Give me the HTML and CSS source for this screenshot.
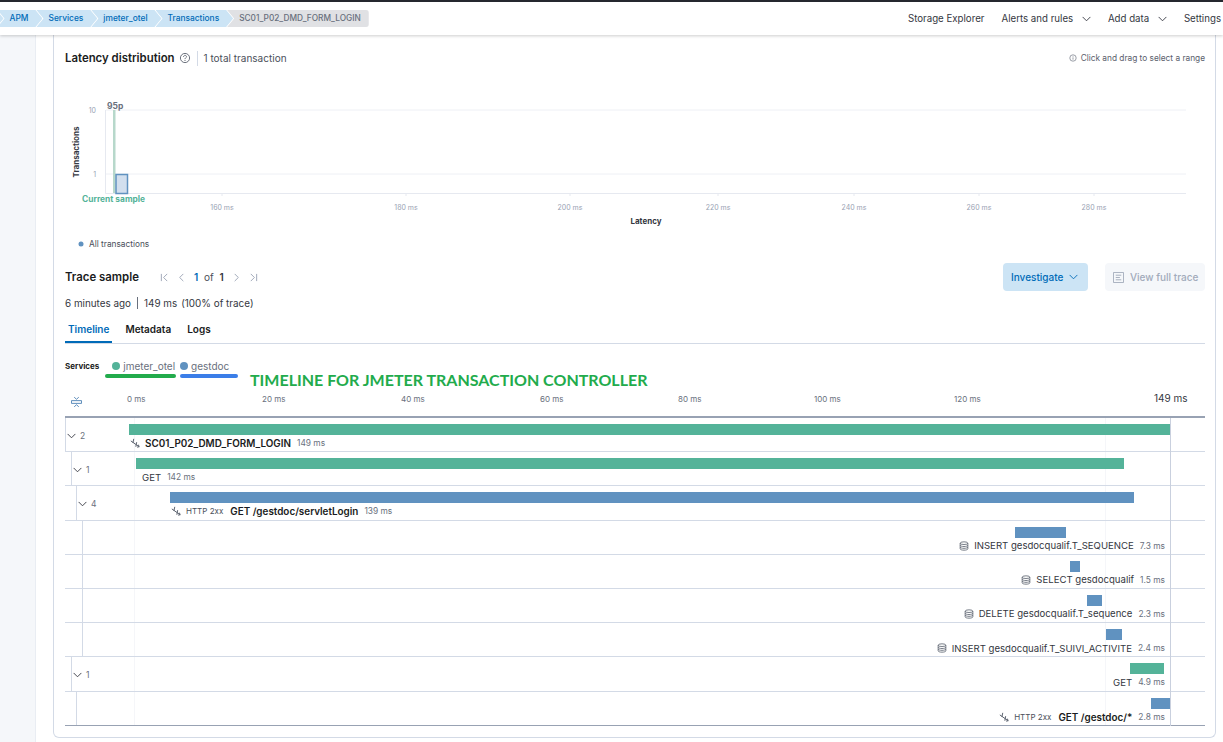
FILE: index.html
```html
<!DOCTYPE html>
<html lang="en">
<head>
    <meta charset="UTF-8">
    <title>SC01_P02_DMD_FORM_LOGIN - Transactions - APM</title>
    <link rel="stylesheet" href="styles.css">
</head>
<body>
    <svg class="sprites" width="0" height="0">
        <symbol id="i-merge" viewBox="0 0 12 12">
            <path d="M1 3.500 11 10.500M4.500 1 3.500 6M8 5 7 10.500M11 10.500 8.500 11M11 10.500 10 8" fill="none" stroke="currentColor" stroke-width="1.200"/>
        </symbol>
        <symbol id="i-db" viewBox="0 0 12 12">
            <ellipse cx="6" cy="2.6" rx="4.6" ry="1.6" fill="none" stroke="currentColor"/>
            <path d="M1.4 2.6v6.8c0 .9 2 1.6 4.6 1.6s4.6-.7 4.6-1.6V2.6M1.4 5c0 .9 2 1.6 4.6 1.6s4.6-.7 4.6-1.6M1.4 7.2c0 .9 2 1.6 4.6 1.6s4.6-.7 4.6-1.6" fill="none" stroke="currentColor"/>
        </symbol>
        <symbol id="i-down" viewBox="0 0 10 6">
            <path d="M.7.7 5 5 9.3.7" fill="none" stroke="currentColor" stroke-width="1"/>
        </symbol>
    </svg>

    <header class="topbar">
        <nav class="crumbs">
            <a class="crumb crumb-cut"></a>
            <a class="crumb">APM</a>
            <a class="crumb">Services</a>
            <a class="crumb">jmeter_otel</a>
            <a class="crumb">Transactions</a>
            <span class="crumb crumb-last">SC01_P02_DMD_FORM_LOGIN</span>
        </nav>
        <div class="topmenu">
            <a>Storage Explorer</a>
            <a>Alerts and rules <svg class="caret"><use href="#i-down"/></svg></a>
            <a>Add data <svg class="caret"><use href="#i-down"/></svg></a>
            <a>Settings</a>
        </div>
    </header>

    <div class="layout">
        <aside class="side"></aside>
        <main class="main">
            <section class="card">
                <div class="lat-head">
                    <h2 class="title">Latency distribution</h2>
                    <svg class="help" viewBox="0 0 12 12">
                        <circle cx="6" cy="6" r="4.6" fill="none" stroke="currentColor" stroke-width=".9"/>
                        <path d="M4.5 4.9c0-2 3-2 3-.2 0 1.100-1.500 1.100-1.500 2.400" fill="none" stroke="currentColor" stroke-width=".9"/>
                        <circle cx="6" cy="8.500" r=".6" fill="currentColor"/>
                    </svg>
                    <span class="lat-count">1 total transaction</span>
                    <span class="hint">
                        <svg class="hint-icon" viewBox="0 0 12 12">
                            <circle cx="6" cy="6" r="4.800" fill="none" stroke="currentColor"/>
                            <path d="M6 5v3.500M6 3v1" stroke="currentColor"/>
                        </svg>
                        Click and drag to select a range
                    </span>
                </div>

                <svg class="chart" viewBox="65 90 1140 165" width="1140" height="165">
                    <g stroke="#eef0f5">
                        <path d="M106 110H1186M106 174H1186"/>
                    </g>
                    <path d="M105.500 110V193.500H1186" fill="none" stroke="#e6e9f0"/>
                    <path d="M222 193v3M406 193v3M570 193v3M718 193v3M854 193v3M979 193v3M1094 193v3" stroke="#e6e9f0"/>
                    <rect x="113" y="110" width="2.500" height="83" fill="#b7d8cb"/>
                    <rect x="116" y="174.500" width="11.500" height="19" fill="#d2dfee" stroke="#6092c0" stroke-width="1.500"/>
                    <text class="c-tick" x="96" y="113" text-anchor="end">10</text>
                    <text class="c-tick" x="96" y="177" text-anchor="end">1</text>
                    <text class="c-95" x="107" y="108.500">95p</text>
                    <text class="c-axis" transform="translate(79 152) rotate(-90)" text-anchor="middle">Transactions</text>
                    <text class="c-sample" x="82" y="202">Current sample</text>
                    <g class="c-tick" text-anchor="middle">
                        <text x="222" y="210">160 ms</text>
                        <text x="406" y="210">180 ms</text>
                        <text x="570" y="210">200 ms</text>
                        <text x="718" y="210">220 ms</text>
                        <text x="854" y="210">240 ms</text>
                        <text x="979" y="210">260 ms</text>
                        <text x="1094" y="210">280 ms</text>
                    </g>
                    <text class="c-axis" x="646" y="224" text-anchor="middle">Latency</text>
                    <circle cx="81" cy="244" r="2.500" fill="#6092c0"/>
                    <text class="c-legend" x="89" y="246.800">All transactions</text>
                </svg>

                <div class="trace-head">
                    <h2 class="title">Trace sample</h2>
                    <div class="pager">
                        <svg class="pg" viewBox="0 0 10 10"><path d="M1.500 1v8M8 1 4 5l4 4" /></svg>
                        <svg class="pg" viewBox="0 0 10 10"><path d="M7 1 3 5l4 4"/></svg>
                        <span class="pg-text"><b>1</b> of <em>1</em></span>
                        <svg class="pg" viewBox="0 0 10 10"><path d="M3 1l4 4-4 4"/></svg>
                        <svg class="pg" viewBox="0 0 10 10"><path d="M8.500 1v8M2 1l4 4-4 4"/></svg>
                    </div>
                    <button class="btn btn-blue">Investigate <svg class="caret"><use href="#i-down"/></svg></button>
                    <button class="btn btn-off">
                        <svg class="doc" viewBox="0 0 12 12"><path d="M.5.5h11v11H.5zM3 3.500h6M3 6h4.500M3 8.500h6" fill="none" stroke="currentColor"/></svg>
                        View full trace
                    </button>
                </div>

                <div class="trace-meta">
                    <span>6 minutes ago</span><span class="sep"></span><span>149 ms</span><span class="pct">(100% of trace)</span>
                </div>

                <div class="tabs">
                    <a class="tab tab-on">Timeline</a>
                    <a class="tab">Metadata</a>
                    <a class="tab">Logs</a>
                </div>

                <div class="legend">
                    <span class="legend-title">Services</span>
                    <span class="svc svc-first"><i class="dot dot-green"></i>jmeter_otel</span>
                    <span class="svc"><i class="dot dot-blue"></i>gestdoc</span>
                    <i class="mark mark-green"></i>
                    <i class="mark mark-blue"></i>
                    <span class="note">TIMELINE FOR JMETER TRANSACTION CONTROLLER</span>
                </div>

                <div class="axis">
                    <svg class="collapse" viewBox="0 0 12 12">
                        <path d="M.5 4.500h11v3H.5zM3.500 .8 6 3 8.500 .8M3.500 11.200 6 9 8.500 11.200" fill="none" stroke="#4e82b5"/>
                    </svg>
                    <span class="tick" style="left:62px">0 ms</span>
                    <span class="tick" style="left:197px">20 ms</span>
                    <span class="tick" style="left:336px">40 ms</span>
                    <span class="tick" style="left:475px">60 ms</span>
                    <span class="tick" style="left:613px">80 ms</span>
                    <span class="tick" style="left:749px">100 ms</span>
                    <span class="tick" style="left:889px">120 ms</span>
                    <span class="tick-end">149 ms</span>
                </div>

                <div class="rows">
                    <i class="grid-line grid-a"></i>
                    <i class="grid-line grid-b"></i>
                    <div class="row">
                        <div class="branch lvl0"><svg class="caret"><use href="#i-down"/></svg><span class="count">2</span></div>
                        <div class="bar bar-green" style="margin-left:64px;width:1041px"></div>
                        <div class="label" style="margin-left:65px">
                            <svg class="ico"><use href="#i-merge"/></svg>
                            <b class="name">SC01_P02_DMD_FORM_LOGIN</b><span class="dur">149 ms</span>
                        </div>
                    </div>
                    <div class="row">
                        <div class="branch lvl1"><svg class="caret"><use href="#i-down"/></svg><span class="count">1</span></div>
                        <div class="bar bar-green" style="margin-left:71px;width:988px"></div>
                        <div class="label" style="margin-left:77px">
                            <span class="name">GET</span><span class="dur">142 ms</span>
                        </div>
                    </div>
                    <div class="row">
                        <div class="branch lvl2"><svg class="caret"><use href="#i-down"/></svg><span class="count">4</span></div>
                        <div class="bar bar-blue" style="margin-left:105px;width:964px"></div>
                        <div class="label" style="margin-left:106px">
                            <svg class="ico"><use href="#i-merge"/></svg>
                            <span class="status">HTTP 2xx</span><b class="name">GET /gestdoc/servletLogin</b><span class="dur">139 ms</span>
                        </div>
                    </div>
                    <div class="row">
                        <div class="branch lvl3"></div>
                        <div class="bar bar-blue" style="margin-left:950px;width:51px"></div>
                        <div class="label label-end">
                            <svg class="ico"><use href="#i-db"/></svg>
                            <span class="name">INSERT gesdocqualif.T_SEQUENCE</span><span class="dur">7.3 ms</span>
                        </div>
                    </div>
                    <div class="row">
                        <div class="branch lvl3"></div>
                        <div class="bar bar-blue" style="margin-left:1005px;width:10px"></div>
                        <div class="label label-end">
                            <svg class="ico"><use href="#i-db"/></svg>
                            <span class="name">SELECT gesdocqualif</span><span class="dur">1.5 ms</span>
                        </div>
                    </div>
                    <div class="row">
                        <div class="branch lvl3"></div>
                        <div class="bar bar-blue" style="margin-left:1022px;width:15px"></div>
                        <div class="label label-end">
                            <svg class="ico"><use href="#i-db"/></svg>
                            <span class="name">DELETE gesdocqualif.T_sequence</span><span class="dur">2.3 ms</span>
                        </div>
                    </div>
                    <div class="row">
                        <div class="branch lvl3"></div>
                        <div class="bar bar-blue" style="margin-left:1041px;width:16px"></div>
                        <div class="label label-end">
                            <svg class="ico"><use href="#i-db"/></svg>
                            <span class="name">INSERT gesdocqualif.T_SUIVI_ACTIVITE</span><span class="dur">2.4 ms</span>
                        </div>
                    </div>
                    <div class="row">
                        <div class="branch lvl1"><svg class="caret"><use href="#i-down"/></svg><span class="count">1</span></div>
                        <div class="bar bar-green" style="margin-left:1065px;width:34px"></div>
                        <div class="label label-end">
                            <span class="name">GET</span><span class="dur">4.9 ms</span>
                        </div>
                    </div>
                    <div class="row row-last">
                        <div class="branch lvl2"></div>
                        <div class="bar bar-blue" style="margin-left:1086px;width:19px"></div>
                        <div class="label label-end">
                            <svg class="ico"><use href="#i-merge"/></svg>
                            <span class="status">HTTP 2xx</span><b class="name">GET /gestdoc/*</b><span class="dur">2.8 ms</span>
                        </div>
                    </div>
                    <i class="end-line"></i>
                </div>
            </section>
        </main>
    </div>
</body>
</html>
```

FILE: styles.css
```css
html, body {
    height: 100%;
}
body {
    margin: 0;
    overflow: hidden;
    background-color: #ffffff;
    color: #343741;
    font-family: 'Inter', 'Liberation Sans', sans-serif;
    font-size: 10px;
}
a {
    color: inherit;
    text-decoration: none;
}
.sprites {
    position: absolute;
}
.caret {
    width: 9px;
    height: 6px;
    color: #343741;
}

/* top bar */
.topbar {
    position: relative;
    z-index: 2;
    display: flex;
    align-items: center;
    justify-content: space-between;
    box-sizing: border-box;
    height: 35px;
    border-top: 2px solid #25282f;
    background-color: #ffffff;
    box-shadow: 0 1px 3px rgba(0, 0, 0, 0.2);
}
.crumbs {
    display: flex;
    margin-left: -10.5px;
}
.crumb {
    display: block;
    height: 17px;
    margin-right: -6px;
    padding: 0 14px 0 12px;
    background-color: #cce4f5;
    color: #006bb8;
    font-size: 8.4px;
    font-weight: 500;
    line-height: 17px;
    clip-path: polygon(0 0, calc(100% - 7px) 0, 100% 50%, calc(100% - 7px) 100%, 0 100%, 7px 50%);
}
.crumb-cut {
    box-sizing: border-box;
    width: 14px;
    padding: 0;
}
.crumb-last {
    margin-right: 0;
    padding-right: 8px;
    background-color: #e0e1e4;
    color: #69707d;
    font-size: 8.3px;
    border-radius: 0 3px 3px 0;
    clip-path: polygon(0 0, 100% 0, 100% 100%, 0 100%, 7px 50%);
}
.topmenu {
    display: flex;
    gap: 17px;
    margin-right: 2px;
    white-space: nowrap;
    font-size: 9.7px;
}
.topmenu .caret {
    margin-left: 6px;
}

/* page */
.layout {
    display: flex;
    height: 707px;
}
.side {
    width: 36px;
    background-color: #f5f7fa;
    border-right: 1px solid #e9edf3;
    box-sizing: border-box;
}
.main {
    flex: 1;
    padding: 0 7px 4px 17px;
}
.card {
    box-sizing: border-box;
    height: 703px;
    padding: 0 10px 0 11px;
    border: 1px solid #d3dae6;
    border-top: 0;
    border-radius: 0 0 6px 6px;
}
.title {
    margin: 0;
    color: #1a1c21;
    font-size: 11.4px;
    font-weight: 600;
}

/* latency header */
.lat-head {
    display: flex;
    align-items: center;
    height: 16px;
    padding-top: 15px;
}
.help {
    width: 12px;
    height: 12px;
    margin-left: 4px;
    color: #5d6470;
}
.lat-count {
    margin-left: 6px;
    padding-left: 6px;
    border-left: 1px solid #d3dae6;
    font-size: 10px;
    line-height: 15px;
    color: #4b4f5a;
}
.hint {
    display: flex;
    align-items: center;
    margin-left: auto;
    color: #5a606c;
    font-size: 8.3px;
}
.hint-icon {
    width: 8px;
    height: 8px;
    margin-right: 4px;
    color: #69707d;
}

/* chart */
.chart {
    display: block;
    margin-top: 24px;
}
.chart text {
    font-family: 'Inter', 'Liberation Sans', sans-serif;
}
.c-tick {
    fill: #98a2b3;
    font-size: 7px;
}
.c-95 {
    fill: #69707d;
    font-size: 8.5px;
    font-weight: 700;
}
.c-axis {
    fill: #343741;
    font-size: 8px;
    font-weight: 700;
}
.c-sample {
    fill: #54b399;
    font-size: 8.4px;
    font-weight: 700;
}
.c-legend {
    fill: #4b4f5a;
    font-size: 8.3px;
}

/* trace head */
.trace-head {
    display: flex;
    align-items: center;
    height: 28px;
    margin-top: 8px;
}
.pager {
    display: flex;
    align-items: center;
    gap: 8px;
    margin-left: 21px;
    font-size: 10px;
}
.pg {
    width: 9px;
    height: 9px;
    fill: none;
    stroke: #98a2b3;
    stroke-width: 1;
}
.pg-text {
    color: #4b4f5a;
    word-spacing: 3px;
}
.pg-text b {
    color: #006bb8;
    font-weight: 600;
}
.pg-text em {
    color: #343741;
    font-style: normal;
    font-weight: 600;
}
.btn {
    display: flex;
    align-items: center;
    height: 28px;
    border: 0;
    border-radius: 4px;
    font-family: inherit;
    font-size: 10px;
    font-weight: 500;
    white-space: nowrap;
}
.btn-blue {
    width: 85px;
    margin-left: auto;
    padding: 0 8px;
    gap: 6px;
    background-color: #cce4f5;
    color: #006bb8;
}
.btn-blue .caret {
    color: #006bb8;
}
.btn-off {
    width: 100px;
    margin-left: 17px;
    padding: 0 8px;
    gap: 6px;
    background-color: #f5f7fa;
    color: #a2abba;
}
.doc {
    width: 11px;
    height: 11px;
    flex: none;
}

.trace-meta {
    display: flex;
    align-items: center;
    height: 14px;
    margin-top: 5px;
    font-size: 9.9px;
    color: #343741;
}
.sep {
    height: 12px;
    margin: 0 6px;
    border-left: 1px solid #69707d;
}
.pct {
    margin-left: 4px;
}

/* tabs */
.tabs {
    display: flex;
    gap: 10px;
    height: 24px;
    margin-top: 9px;
    border-bottom: 1px solid #d3dae6;
}
.tab {
    height: 23px;
    padding: 0 3px;
    color: #1a1c21;
    font-size: 10px;
    font-weight: 600;
    line-height: 21px;
}
.tab-on {
    border-bottom: 2px solid #006bb8;
    color: #006bb8;
    height: 22px;
}

/* services legend */
.legend {
    position: relative;
    display: flex;
    align-items: center;
    height: 20px;
    padding-top: 12px;
    color: #69707d;
    font-size: 10px;
}
.legend-title {
    color: #1a1c21;
    font-size: 8px;
    font-weight: 700;
}
.svc {
    display: flex;
    align-items: center;
    margin-left: 5px;
}
.svc-first {
    margin-left: 13px;
}
.dot {
    width: 8px;
    height: 8px;
    margin-right: 3px;
    border-radius: 50%;
}
.dot-green {
    background-color: #54b399;
}
.dot-blue {
    background-color: #6092c0;
}
.mark {
    position: absolute;
    top: 30px;
    height: 4px;
    border-radius: 2px;
}
.mark-green {
    left: 40px;
    width: 71px;
    background-color: #22ab4c;
}
.mark-blue {
    left: 115px;
    width: 58px;
    background-color: #3b7ee8;
}
.note {
    position: absolute;
    left: 185px;
    top: 26px;
    color: #22ab4c;
    font-family: 'Lato', 'Liberation Sans', sans-serif;
    font-size: 16px;
    font-weight: 700;
    white-space: nowrap;
}

/* time axis */
.axis {
    position: relative;
    height: 37px;
    border-bottom: 2px solid #98a2b3;
    margin-top: 5px;
    box-sizing: border-box;
}
.collapse {
    position: absolute;
    left: 6px;
    top: 15px;
    width: 11px;
    height: 12px;
}
.tick {
    position: absolute;
    top: 13px;
    color: #69707d;
    font-size: 8px;
}
.tick-end {
    position: absolute;
    left: 1089px;
    top: 11px;
    color: #343741;
    font-size: 10px;
}

/* waterfall rows */
.rows {
    position: relative;
}
.row {
    position: relative;
    box-sizing: border-box;
    height: 34.200px;
    padding-top: 6px;
    border-bottom: 1px solid #d3dae6;
}
.row-last {
    border-bottom: 1px solid #98a2b3;
}
.branch {
    position: absolute;
    top: 0;
    bottom: 0;
    display: flex;
    align-items: center;
    padding-top: 3px;
    box-sizing: border-box;
    border-left: 1px solid #d3dae6;
    color: #69707d;
    font-size: 8.500px;
}
.branch .caret {
    margin: 0 4px 0 1px;
}
.lvl0 {
    left: 0;
}
.lvl1 {
    left: 6px;
}
.lvl2 {
    left: 11px;
}
.lvl3 {
    left: 17px;
}
.bar {
    position: relative;
    z-index: 1;
    height: 11px;
}
.bar-green {
    background-color: #54b399;
}
.bar-blue {
    background-color: #6092c0;
}
.label {
    display: flex;
    align-items: center;
    height: 14px;
    margin-top: 1px;
    white-space: nowrap;
    color: #343741;
    font-size: 9.6px;
}
.label-end {
    justify-content: flex-end;
    margin-right: 40px;
}
.name {
    color: #343741;
}
b.name {
    color: #1a1c21;
    font-size: 9.9px;
    font-weight: 600;
}
.dur {
    margin-left: 6px;
    color: #69707d;
    font-size: 8.4px;
}
.status {
    margin-right: 7px;
    color: #4b4f5a;
    font-size: 8px;
}
.ico {
    width: 10px;
    height: 10px;
    margin-right: 5px;
    color: #5d6470;
}
.grid-line {
    position: absolute;
    top: 0;
    bottom: 0;
    border-left: 1px solid #f5f6f9;
}
.grid-a {
    left: 69px;
}
.grid-b {
    left: 1040px;
}
.end-line {
    position: absolute;
    top: 0;
    bottom: 0;
    left: 1105px;
    border-left: 1px solid #c9d0de;
}
```
